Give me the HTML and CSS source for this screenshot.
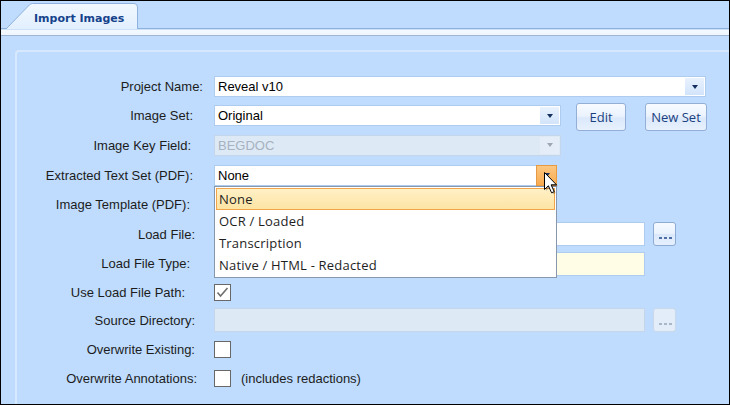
FILE: index.html
```html
<!DOCTYPE html>
<html>
<head>
<meta charset="utf-8">
<link rel="stylesheet" href="styles.css">
</head>
<body>
<div class="screen">
  <div class="tabbar">
    <div class="tab">
      <svg class="tab-shape" width="132" height="26" viewBox="0 0 132 26">
        <defs>
          <linearGradient id="tabg" x1="0" y1="0" x2="0" y2="1">
            <stop offset="0" stop-color="#f1f8ff"/>
            <stop offset="1" stop-color="#e2effe"/>
          </linearGradient>
        </defs>
        <path d="M0,26 L23.5,1.8 Q24.8,0.5 26.5,0.5 L128,0.5 Q131.5,0.5 131.5,4 L131.5,26 Z" fill="url(#tabg)"/>
        <path d="M0,26 L23.5,1.8 Q24.8,0.5 26.5,0.5 L128,0.5 Q131.5,0.5 131.5,4 L131.5,26" fill="none" stroke="#8fb2de" stroke-width="1"/>
      </svg>
      <span class="tab-label">Import Images</span>
    </div>
  </div>
  <div class="band"></div>
  <div class="panel">
    <div class="form">
      <div class="lbl lbl--out8">Project Name:</div>
      <div class="field">
        <div class="combo combo--full"><span class="combo-text">Reveal v10</span><span class="combo-btn"></span></div>
      </div>

      <div class="lbl lbl--in2">Image Set:</div>
      <div class="field">
        <div class="combo combo--short"><span class="combo-text">Original</span><span class="combo-btn"></span></div>
        <div class="btn btn--edit">Edit</div>
        <div class="btn btn--new">New Set</div>
      </div>

      <div class="lbl lbl--in4">Image Key Field:</div>
      <div class="field">
        <div class="combo combo--short combo--disabled"><span class="combo-text">BEGDOC</span><span class="combo-btn"></span></div>
      </div>

      <div class="lbl lbl--in2">Extracted Text Set (PDF):</div>
      <div class="field">
        <div class="combo combo--open"><span class="combo-text">None</span><span class="combo-btn">
            <svg class="cursor" width="17" height="24" viewBox="0 0 17 24">
              <path d="M1.5,1.5 L1.5,18.5 L5.4,14.8 L8.6,21.8 L11.2,20.6 L8.1,13.8 L13.5,13.8 Z" fill="#000" opacity=".25" transform="translate(1.5,1.5)"/>
              <path d="M1.5,1.5 L1.5,18.5 L5.4,14.8 L8.6,21.8 L11.2,20.6 L8.1,13.8 L13.5,13.8 Z" fill="#fff" stroke="#000" stroke-width="1" stroke-linejoin="miter"/>
            </svg>
          </span>
          <div class="dropdown">
            <div class="dd-item dd-item--hl">None</div>
            <div class="dd-item">OCR / Loaded</div>
            <div class="dd-item">Transcription</div>
            <div class="dd-item">Native / HTML - Redacted</div>
          </div>
        </div>
      </div>

      <div class="lbl lbl--in5">Image Template (PDF):</div>
      <div class="field">
        <div class="combo"><span class="combo-text"></span><span class="combo-btn"></span></div>
      </div>

      <div class="lbl">Load File:</div>
      <div class="field">
        <div class="tb"></div>
        <div class="ell"></div>
      </div>

      <div class="lbl lbl--in5">Load File Type:</div>
      <div class="field">
        <div class="tb tb--req"></div>
      </div>

      <div class="lbl lbl--in10">Use Load File Path:</div>
      <div class="field">
        <div class="cb"><svg width="15" height="15" viewBox="0 0 15 15"><polyline points="2.5,7.5 5.5,11 12.5,3" fill="none" stroke="#6f6f6f" stroke-width="1.6"/></svg></div>
      </div>

      <div class="lbl">Source Directory:</div>
      <div class="field">
        <div class="tb tb--disabled"></div>
        <div class="ell ell--disabled"></div>
      </div>

      <div class="lbl">Overwrite Existing:</div>
      <div class="field">
        <div class="cb"></div>
      </div>

      <div class="lbl lbl--out2">Overwrite Annotations:</div>
      <div class="field">
        <div class="cb"></div>
        <span class="note">(includes redactions)</span>
      </div>
    </div>
  </div>
</div>
</body>
</html>
```

FILE: styles.css
```css
* { box-sizing: border-box; margin: 0; padding: 0; }
html, body { width: 730px; height: 405px; overflow: hidden; }
body {
  font-family: "Liberation Sans", Arial, sans-serif;
  font-size: 13px;
  color: #1e1e1e;
}
.screen {
  width: 730px;
  height: 405px;
  border: 1px solid #000;
  background: #bfdcfe;
  overflow: hidden;
  position: relative;
}
.tabbar {
  height: 27px;
  display: flex;
  align-items: flex-end;
  padding-left: 5px;
}
.tab {
  position: relative;
  z-index: 1;
  width: 132px;
  height: 26px;
  margin-bottom: -1px;
  padding: 7px 0 0 28px;
}
.tab-shape { position: absolute; left: 0; top: 0; z-index: -1; }
.tab-label {
  font-family: "DejaVu Sans", Verdana, sans-serif;
  font-weight: bold;
  font-size: 11px;
  line-height: 13px;
  color: #15428b;
  white-space: nowrap;
}
.band {
  height: 8px;
  border-top: 1px solid #8db0dd;
  border-bottom: 1px solid #9fb6d3;
  background: linear-gradient(#cde1f9 0, #cde1f9 1px, #f4f9ff 1px, #eef5fe 100%);
}
.panel {
  margin: 14px 0 0 14px;
  width: 760px;
  height: 400px;
  border-top: 2px solid #d7e8fd;
  border-left: 2px solid #d7e8fd;
  border-top-left-radius: 4px;
  padding-top: 20px;
}
.form {
  display: grid;
  grid-template-columns: 178px 1fr;
  grid-template-rows: 29px 29px 30px 30px 29px 30px 29px 28px 28px 30px 28px;
  column-gap: 19px;
  align-items: center;
}
.lbl { text-align: right; white-space: nowrap; color: #1c1c1c; }
.lbl--out8 { margin-right: -8px; }
.lbl--out2 { margin-right: -2px; }
.lbl--in2 { padding-right: 2px; }
.lbl--in4 { padding-right: 4px; }
.lbl--in5 { padding-right: 5px; }
.lbl--in10 { padding-right: 10px; }
.field { display: flex; align-items: center; height: 100%; }

.combo {
  position: relative;
  display: flex;
  width: 343px;
  height: 21px;
  border: 1px solid #aecbf0;
  background: #fff;
  color: #000;
}
.combo--full { width: 492px; }
.combo--short { width: 347px; }
.combo-text { flex: 1; padding-left: 3px; line-height: 19px; white-space: nowrap; }
.combo-btn {
  position: relative;
  width: 19px;
  margin: 1px;
  background: linear-gradient(#e9f2fe, #d2e4fb);
  display: flex;
  align-items: center;
  justify-content: center;
}
.combo-btn::before {
  content: "";
  border-left: 3px solid transparent;
  border-right: 3px solid transparent;
  border-top: 4px solid #15305e;
}
.combo--disabled {
  background: #dee9f6;
  border-color: #c5d6ea;
  color: #a6b2c0;
}
.combo--disabled .combo-btn { background: #e4edf8; }
.combo--disabled .combo-btn::before { border-top-color: #9ea7b3; }
.combo--open .combo-btn {
  width: 21px;
  margin: -1px -1px -1px 0;
  border: 1px solid #e69a43;
  background: linear-gradient(#fcc781, #f9ab4f);
}
.cursor { position: absolute; left: 6px; top: 5px; z-index: 5; }

.dropdown {
  position: absolute;
  left: -1px;
  top: 20px;
  width: 343px;
  height: 92px;
  border: 1px solid #8797ac;
  background: #fff;
  padding: 1px;
  z-index: 3;
}
.dd-item {
  height: 22px;
  border: 1px solid transparent;
  padding-left: 2px;
  font-family: "Open Sans", "Noto Sans", sans-serif;
  font-size: 13px;
  letter-spacing: 0.2px;
  line-height: 20px;
  color: #1e1e1e;
  white-space: nowrap;
}
.dd-item--hl {
  border-color: #f2a548;
  background: linear-gradient(#fff0c6, #fde4a4);
}

.btn {
  height: 28px;
  margin-top: 3px;
  border: 1px solid #93afd6;
  border-radius: 3px;
  background: linear-gradient(#f8fbff 0%, #ebf3fe 45%, #dbe9fb 55%, #e8f1fd 100%);
  font-family: "Open Sans", "Noto Sans", sans-serif;
  font-size: 13px;
  color: #1b3f7d;
  display: flex;
  align-items: center;
  justify-content: center;
}
.btn--edit { width: 50px; margin-left: 15px; }
.btn--new { width: 62px; margin-left: 19px; }

.tb {
  width: 431px;
  height: 24px;
  border: 1px solid #aecbf0;
  background: #fff;
}
.tb--req { background: #fffde6; }
.tb--disabled { background: #dee9f6; border-color: #c5d6ea; }

.ell {
  width: 23px;
  height: 24px;
  margin-left: 8px;
  border: 1px solid #8eabd3;
  border-radius: 3px;
  background: linear-gradient(#f6faff 0%, #e9f2fe 50%, #dae8fb 50%, #e6f0fd 100%);
  display: flex;
  align-items: flex-end;
  padding: 0 0 6px 5px;
}
.ell::before {
  content: "";
  width: 3px;
  height: 2px;
  background: #4f70a6;
  box-shadow: 5px 0 #4f70a6, 10px 0 #4f70a6;
}
.ell--disabled {
  border-color: #c9d8ea;
  background: #e3edf9;
}
.ell--disabled::before {
  background: #aab7c7;
  box-shadow: 5px 0 #aab7c7, 10px 0 #aab7c7;
}

.cb {
  width: 17px;
  height: 17px;
  border: 1px solid #686868;
  background: #fff;
  display: flex;
  align-items: center;
  justify-content: center;
}
.note { margin-left: 10px; color: #1c1c1c; white-space: nowrap; }
```
